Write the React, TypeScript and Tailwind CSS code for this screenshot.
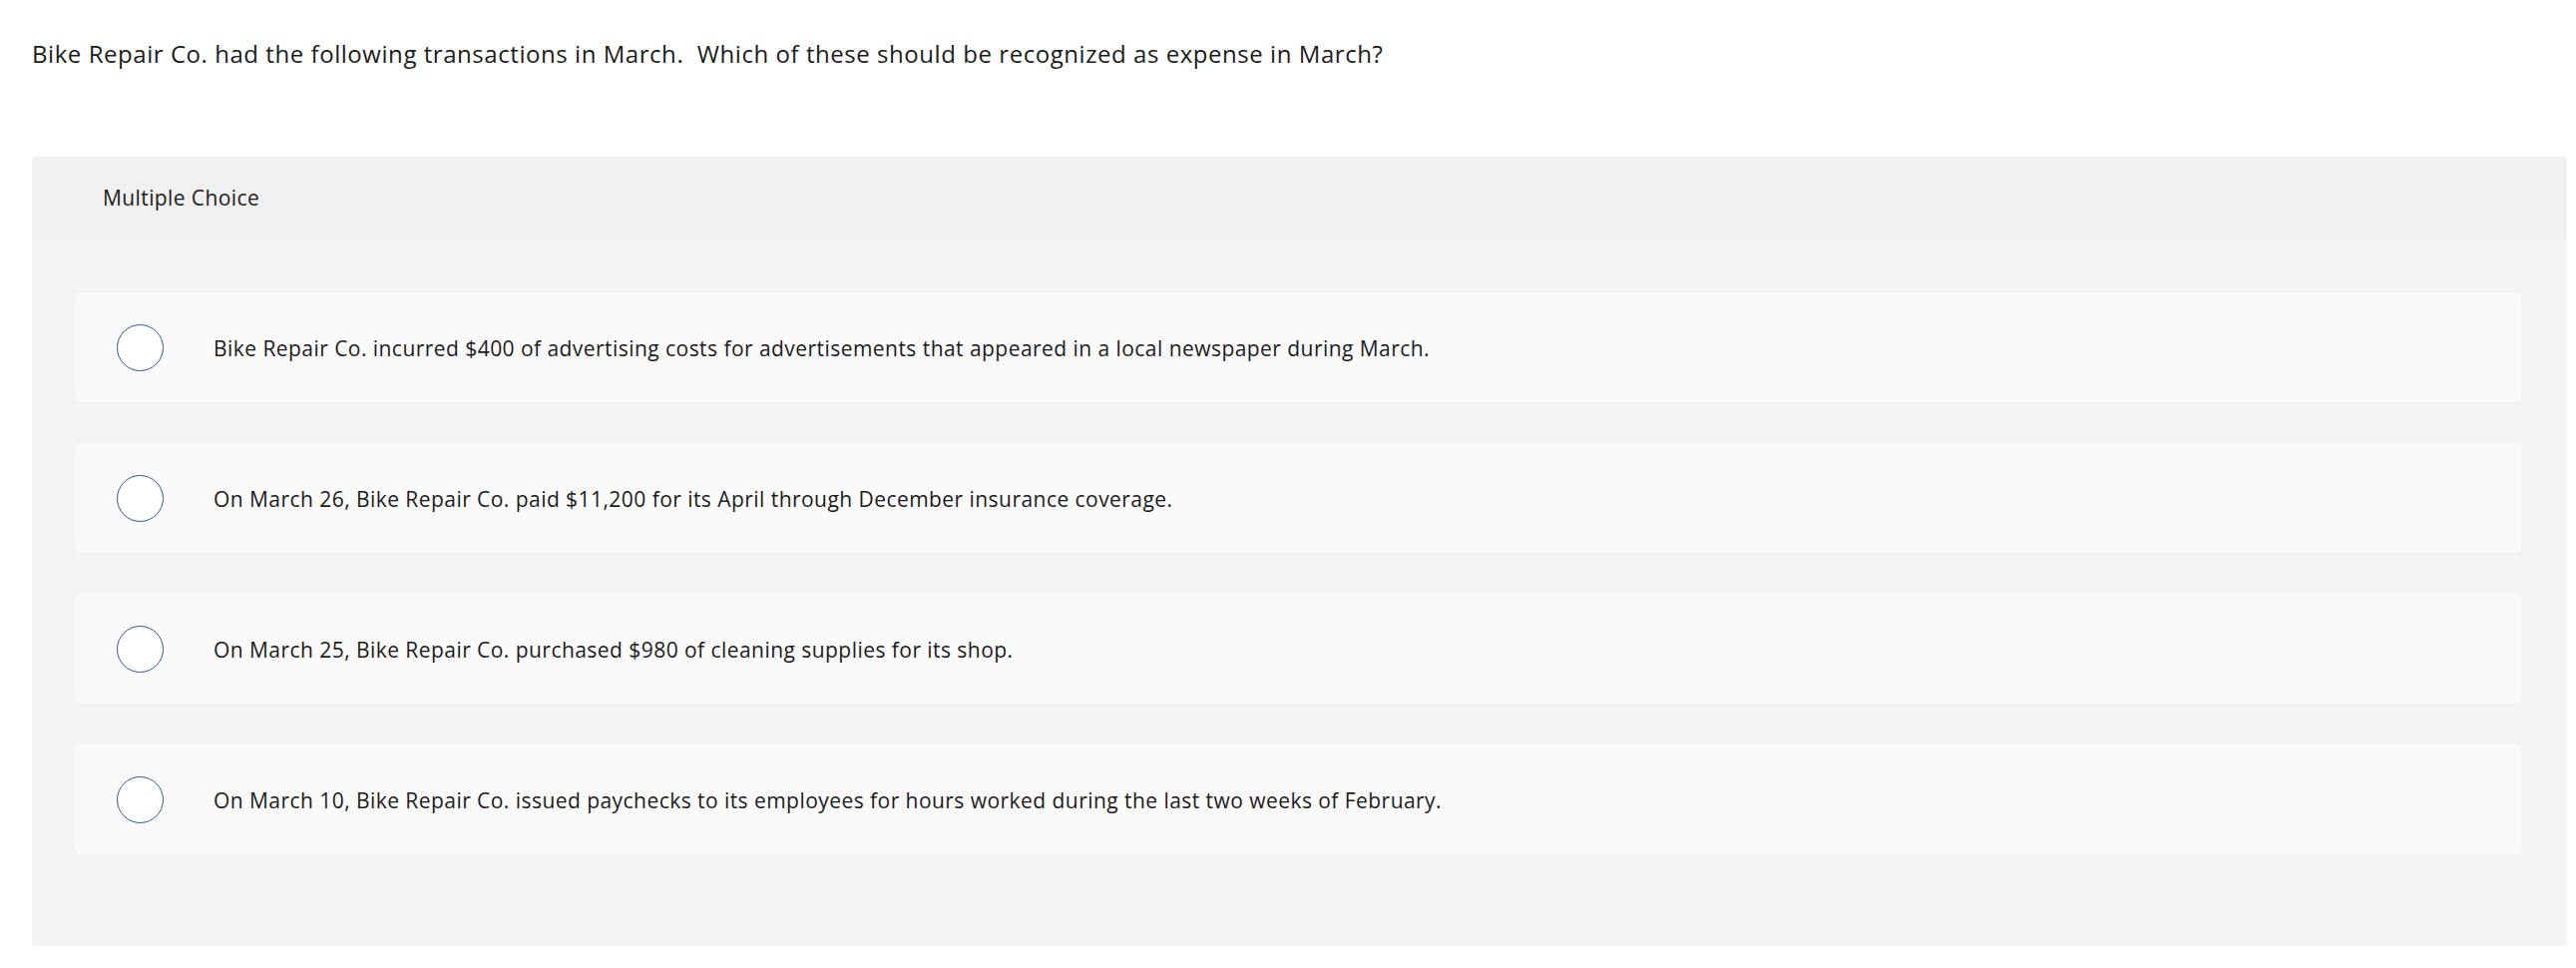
const options = [
  'Bike Repair Co. incurred $400 of advertising costs for advertisements that appeared in a local newspaper during March.',
  'On March 26, Bike Repair Co. paid $11,200 for its April through December insurance coverage.',
  'On March 25, Bike Repair Co. purchased $980 of cleaning supplies for its shop.',
  'On March 10, Bike Repair Co. issued paychecks to its employees for hours worked during the last two weeks of February.',
];

const App: React.FC = () => {
  return (
    <div className="min-h-[970px] bg-white text-[#1c1c1c] font-['Open_Sans',sans-serif]">
      <p className="pl-[32px] pt-[39px] text-[24px] leading-[30px] tracking-[0.55px]">
        Bike Repair Co. had the following transactions in March.&nbsp; Which of these should be recognized as expense in March?
      </p>

      <div className="ml-[32px] mr-[9px] mt-[88px] overflow-hidden rounded-[4px] bg-[#f4f4f4]">
        <div className="flex h-[83px] items-center bg-[#f0f0f0] pl-[71px] text-[21px] tracking-[0.4px]">
          Multiple Choice
        </div>
        <div className="flex flex-col gap-[41px] pb-[92px] pl-[43px] pr-[46px] pt-[53px]">
          {options.map((text) => (
            <div
              key={text}
              className="flex h-[110px] items-center rounded-[6px] bg-[#fafafa] pl-[42px]"
            >
              <span className="h-[47px] w-[47px] shrink-0 rounded-full border-[1.5px] border-[#2d5b8c] bg-white" />
              <span className="ml-[50px] pt-[3px] text-[21px] tracking-[0.45px]">{text}</span>
            </div>
          ))}
        </div>
      </div>
    </div>
  );
};

export default App;
